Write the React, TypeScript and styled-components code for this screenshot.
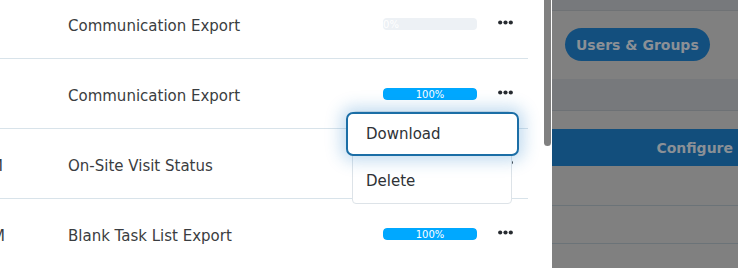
import React from "react"
import styled, { createGlobalStyle } from "styled-components"

const GlobalStyle = createGlobalStyle`
  html, body {
    margin: 0;
    padding: 0;
    width: 738px;
    height: 268px;
    overflow: hidden;
    background: #808080;
    font-family: "DejaVu Sans", "Noto Sans", sans-serif;
  }
`

type Job = {
  time: string
  timeWidth: number
  name: string
  progress: number
}

const jobs: Job[] = [
  { time: "", timeWidth: 4, name: "Communication Export", progress: 0 },
  { time: "", timeWidth: 4, name: "Communication Export", progress: 100 },
  { time: "10:42 AM", timeWidth: 3, name: "On-Site Visit Status", progress: 100 },
  { time: "09:15 AM", timeWidth: 5, name: "Blank Task List Export", progress: 100 },
]

const Dots: React.FC = () => (
  <DotsButton>
    <svg width="15" height="5" viewBox="0 0 15 5">
      <circle cx="2.2" cy="2.5" r="2.1" fill="#272b30" />
      <circle cx="7.5" cy="2.5" r="2.1" fill="#272b30" />
      <circle cx="12.8" cy="2.5" r="2.1" fill="#272b30" />
    </svg>
  </DotsButton>
)

export default function App() {
  return (
    <Screen>
      <GlobalStyle />
      <Drawer>
        <List>
          {jobs.map((job, i) => (
            <Row key={i}>
              <TimeCell $width={job.timeWidth}>
                <span>{job.time}</span>
              </TimeCell>
              <Name>{job.name}</Name>
              <Bar>
                <Fill style={{ width: `${job.progress}%` }}>
                  <BarLabel>{job.progress}%</BarLabel>
                </Fill>
              </Bar>
              <Dots />
            </Row>
          ))}
        </List>
        <ScrollTrack>
          <Thumb />
        </ScrollTrack>
        <Menu>
          <MenuItem $focused>Download</MenuItem>
          <MenuItem>Delete</MenuItem>
        </Menu>
      </Drawer>
      <Backdrop>
        <TopStrip />
        <PillArea>
          <Pill>Users &amp; Groups</Pill>
        </PillArea>
        <Band />
        <Spacer />
        <ConfigureBar>Configure</ConfigureBar>
        <GrayRow $h={39} />
        <GrayRow $h={37} $line />
        <GrayRow $h={24} $line />
      </Backdrop>
    </Screen>
  )
}

const Screen = styled.div`
  display: flex;
  width: 738px;
  height: 268px;
  overflow: hidden;
`

const Drawer = styled.div`
  position: relative;
  display: flex;
  width: 551px;
  height: 268px;
  background: #ffffff;
  border-right: 1px solid #ffffff;
`

const List = styled.div`
  width: 528px;
  margin-top: -11px;
  margin-right: 16px;
`

const Row = styled.div`
  display: flex;
  align-items: center;
  height: 69px;
  border-bottom: 1px solid #d8e3ea;
`

const TimeCell = styled.div<{ $width: number }>`
  display: flex;
  justify-content: flex-end;
  width: ${(p) => p.$width}px;
  margin-right: ${(p) => 68 - p.$width}px;
  overflow: hidden;
  white-space: nowrap;
  font-size: 15px;
  color: #3a3d41;
  padding-top: 4px;
`

const Name = styled.div`
  flex: 1;
  font-size: 15px;
  color: #3a3d41;
  padding-top: 4px;
`

const Bar = styled.div`
  width: 94px;
  height: 12px;
  border-radius: 4px;
  background: #edf1f5;
  overflow: hidden;
  display: flex;
`

const Fill = styled.div`
  display: flex;
  justify-content: safe center;
  height: 100%;
  background: #00a8ff;
  border-radius: 4px;
  white-space: nowrap;
`

const BarLabel = styled.span`
  font-size: 10px;
  line-height: 12px;
  padding-top: 1px;
  color: #ffffff;
`

const DotsButton = styled.div`
  display: flex;
  margin: 0 15px 2px 21px;
  width: 15px;
`

const ScrollTrack = styled.div`
  width: 7px;
  height: 268px;
`

const Thumb = styled.div`
  width: 7px;
  height: 146px;
  background: #808080;
  border-radius: 0 0 4px 4px;
`

const Menu = styled.div`
  position: absolute;
  top: 111px;
  left: 352px;
  width: 158px;
  background: #ffffff;
  border: 1px solid #dde3e8;
  border-radius: 4px;
  display: flex;
  flex-direction: column;
`

const MenuItem = styled.div<{ $focused?: boolean }>`
  height: ${(p) => (p.$focused ? "40px" : "45px")};
  display: flex;
  align-items: center;
  font-size: 15px;
  color: #2e3236;
  padding-left: ${(p) => (p.$focused ? "18px" : "13px")};
  ${(p) =>
    p.$focused &&
    `
    margin: 0 -8px 2px -7px;
    border: 2.5px solid #1b6ea6;
    border-radius: 7px;
    background: #ffffff;
    box-shadow: 0 0 16px 5px rgba(40, 130, 200, 0.28);
  `}
`

const Backdrop = styled.div`
  flex: 1;
  display: flex;
  flex-direction: column;
  background: #808080;
  overflow: hidden;
`

const TopStrip = styled.div`
  height: 10px;
  background: #77797c;
  border-bottom: 1px solid #6f7275;
`

const PillArea = styled.div`
  height: 69px;
  display: flex;
  align-items: center;
  padding-left: 13px;
`

const Pill = styled.div`
  height: 33px;
  padding: 0 11px;
  display: flex;
  align-items: center;
  border-radius: 17px;
  background: #134f7e;
  color: #8b9096;
  font-size: 14px;
  font-weight: 600;
  white-space: nowrap;
`

const Band = styled.div`
  height: 31px;
  background: #77797c;
  border-bottom: 1px solid #6d7175;
`

const Spacer = styled.div`
  height: 19px;
`

const ConfigureBar = styled.div`
  height: 37px;
  display: flex;
  align-items: center;
  justify-content: flex-end;
  padding-right: 5px;
  background: #124e7c;
  color: #8a9096;
  font-size: 14px;
  font-weight: 600;
  white-space: nowrap;
`

const GrayRow = styled.div<{ $h: number; $line?: boolean }>`
  height: ${(p) => p.$h}px;
  flex-shrink: 0;
  border-top: ${(p) => (p.$line ? "1px solid #6b7378" : "none")};
`
